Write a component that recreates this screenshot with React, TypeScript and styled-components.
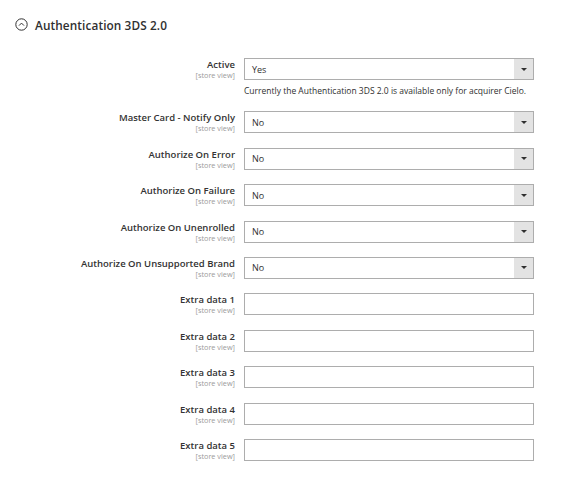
import styled, { createGlobalStyle } from "styled-components";

const GlobalStyle = createGlobalStyle`
  html, body {
    margin: 0;
    padding: 0;
    background: #ffffff;
    font-family: "Open Sans", "Liberation Sans", sans-serif;
    color: #303030;
  }
`;

const Page = styled.div`
  width: 570px;
  height: 499px;
  padding: 16px 0 0 15px;
  box-sizing: border-box;
  overflow: hidden;
`;

const SectionTitle = styled.div`
  display: flex;
  align-items: center;
  gap: 7px;
  height: 17px;
  font-size: 11.8px;
  font-weight: 600;
  color: #303030;
  letter-spacing: 0.1px;
`;

const Fields = styled.div`
  display: flex;
  flex-direction: column;
  gap: 14.4px;
  margin-top: 25px;
`;

const Row = styled.div`
  display: flex;
  align-items: flex-start;
`;

const LabelCol = styled.div`
  width: 220px;
  padding-right: 9px;
  padding-top: 1px;
  display: flex;
  flex-direction: column;
  align-items: flex-end;
  text-align: right;
`;

const LabelText = styled.span`
  font-size: 9.5px;
  font-weight: 600;
  line-height: 12px;
  color: #333333;
`;

const Scope = styled.span`
  font-size: 7.3px;
  line-height: 8px;
  color: #9a9a9a;
`;

const Control = styled.div`
  width: 290px;
  display: flex;
  flex-direction: column;
`;

const SelectBox = styled.div`
  height: 22px;
  box-sizing: border-box;
  border: 1px solid #adadad;
  display: flex;
  align-items: stretch;
  background: #fff;
`;

const SelectValue = styled.span`
  flex: 1;
  display: flex;
  align-items: center;
  padding-left: 7px;
  font-size: 9px;
  color: #303030;
`;

const Arrow = styled.span`
  width: 19px;
  background: #e3e3e3;
  display: flex;
  align-items: center;
  justify-content: center;
  &::after {
    content: "";
    border-left: 3px solid transparent;
    border-right: 3px solid transparent;
    border-top: 3px solid #303030;
  }
`;

const TextInput = styled.div`
  height: 22px;
  box-sizing: border-box;
  border: 1px solid #adadad;
  background: #fff;
`;

const Note = styled.div`
  margin-top: 5px;
  font-size: 8.5px;
  line-height: 12px;
  color: #303030;
  white-space: nowrap;
`;

const CollapseIcon = () => (
  <svg width="13" height="13" viewBox="0 0 13 13">
    <circle cx="6.5" cy="6.5" r="5.7" fill="none" stroke="#303030" strokeWidth="1" />
    <path d="M4 7.6 L6.5 5.1 L9 7.6" fill="none" stroke="#303030" strokeWidth="1" />
  </svg>
);

const selects = [
  { label: "Active", value: "Yes", note: "Currently the Authentication 3DS 2.0 is available only for acquirer Cielo." },
  { label: "Master Card - Notify Only", value: "No" },
  { label: "Authorize On Error", value: "No" },
  { label: "Authorize On Failure", value: "No" },
  { label: "Authorize On Unenrolled", value: "No" },
  { label: "Authorize On Unsupported Brand", value: "No" },
];

const extras = ["Extra data 1", "Extra data 2", "Extra data 3", "Extra data 4", "Extra data 5"];

export default function App() {
  return (
    <>
      <GlobalStyle />
      <Page>
        <SectionTitle>
          <CollapseIcon />
          Authentication 3DS 2.0
        </SectionTitle>
        <Fields>
          {selects.map((s) => (
            <Row key={s.label}>
              <LabelCol>
                <LabelText>{s.label}</LabelText>
                <Scope>[store view]</Scope>
              </LabelCol>
              <Control>
                <SelectBox>
                  <SelectValue>{s.value}</SelectValue>
                  <Arrow />
                </SelectBox>
                {s.note && <Note>{s.note}</Note>}
              </Control>
            </Row>
          ))}
          {extras.map((e) => (
            <Row key={e}>
              <LabelCol>
                <LabelText>{e}</LabelText>
                <Scope>[store view]</Scope>
              </LabelCol>
              <Control>
                <TextInput />
              </Control>
            </Row>
          ))}
        </Fields>
      </Page>
    </>
  );
}
